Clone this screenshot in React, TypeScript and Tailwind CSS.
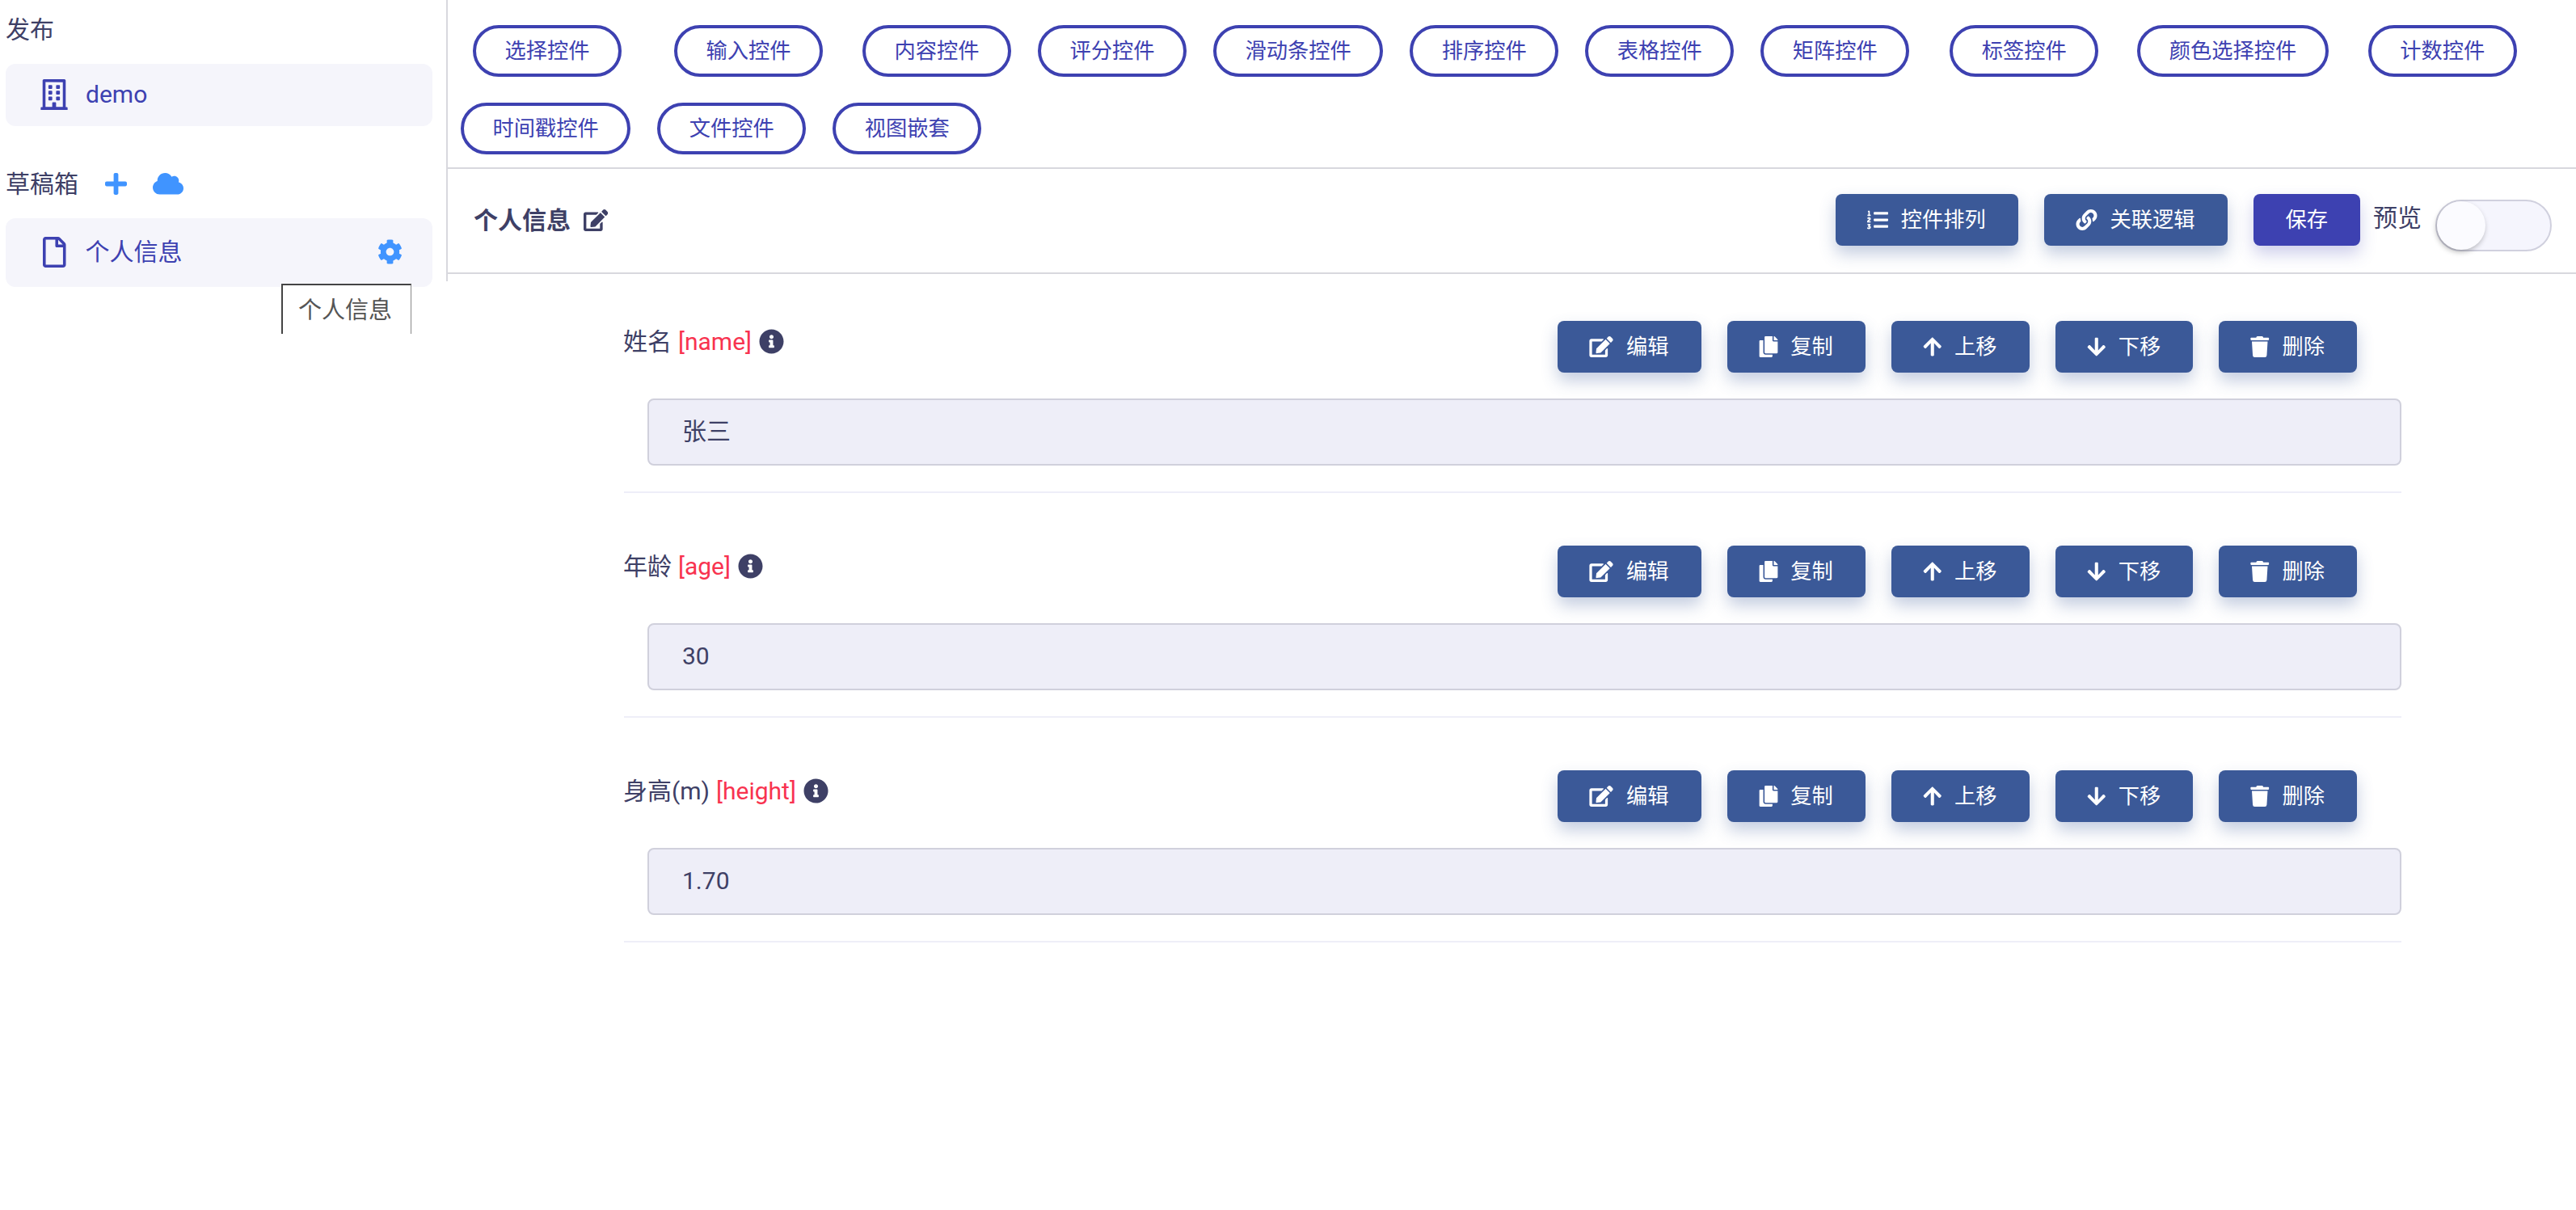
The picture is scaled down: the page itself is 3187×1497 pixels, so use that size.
import React from 'react';
import {
  FaArrowDown,
  FaArrowUp,
  FaCloud,
  FaCog,
  FaCopy,
  FaEdit,
  FaInfoCircle,
  FaLink,
  FaListOl,
  FaPlus,
  FaRegBuilding,
  FaRegFile,
  FaTrash,
} from 'react-icons/fa';

// extra left margins reproduce the uneven spacing of the control palette
const CHIPS = [
  { label: '选择控件', extra: 'ml-[15px]' },
  { label: '输入控件', extra: 'ml-[32px]' },
  { label: '内容控件', extra: 'ml-[16px]' },
  { label: '评分控件', extra: '' },
  { label: '滑动条控件', extra: '' },
  { label: '排序控件', extra: '' },
  { label: '表格控件', extra: '' },
  { label: '矩阵控件', extra: '' },
  { label: '标签控件', extra: 'ml-[17px]' },
  { label: '颜色选择控件', extra: 'ml-[15px]' },
  { label: '计数控件', extra: 'ml-[16px]' },
  { label: '时间戳控件', extra: '' },
  { label: '文件控件', extra: '' },
  { label: '视图嵌套', extra: '' },
];

const FIELDS = [
  { label: '姓名', name: '[name]', value: '张三' },
  { label: '年龄', name: '[age]', value: '30' },
  { label: '身高(m)', name: '[height]', value: '1.70' },
];

const ROW_ACTIONS = [
  { label: '编辑', icon: FaEdit, iconClass: 'w-[30px]' },
  { label: '复制', icon: FaCopy, iconClass: 'w-[24px]' },
  { label: '上移', icon: FaArrowUp, iconClass: 'w-[23.5px]' },
  { label: '下移', icon: FaArrowDown, iconClass: 'w-[23.5px]' },
  { label: '删除', icon: FaTrash, iconClass: 'w-[23.5px]' },
];

const ActionButton: React.FC<{ label: string; icon?: React.ElementType; iconClass?: string; save?: boolean }> = ({
  label,
  icon: Icon,
  iconClass,
  save,
}) => (
  <button
    className={
      save
        ? 'flex h-[64px] items-center rounded-[8px] bg-[#3d41b1] px-[40px] text-[26.25px] text-white shadow-[0_10px_20px_rgba(61,65,177,0.25)]'
        : 'flex h-[64px] items-center gap-[15.75px] rounded-[8px] bg-[#3b5998] pl-[39px] pr-[40px] text-[26.25px] text-white shadow-[0_10px_20px_rgba(59,89,152,0.3)]'
    }
  >
    {Icon && <Icon className={`h-[26px] ${iconClass}`} />}
    {label}
  </button>
);

export default function App() {
  return (
    <div className="flex min-h-screen w-full items-start bg-white font-['Roboto','Noto_Sans_CJK_SC',sans-serif] text-[30px] leading-[45px] text-[#3e4066]">
      {/* Sidebar */}
      <aside className="h-[348px] w-[554px] shrink-0 border-r-2 border-[#d8d8de] pt-[14px] pl-[7px] pr-[17px]">
        <div>发布</div>
        <div className="mt-[20px] flex h-[77px] items-center rounded-[12px] bg-[#f5f5fb] pb-[2px] pl-[43px] text-[#3d41b1]">
          <FaRegBuilding className="h-[38px] w-[34px]" />
          <span className="ml-[22px]">demo</span>
        </div>
        <div className="mt-[49px] flex items-center">
          <span>草稿箱</span>
          <FaPlus className="ml-[33px] h-[31px] w-[27px] text-[#4094ff]" />
          <FaCloud className="ml-[32px] h-[30.4px] w-[38px] text-[#4094ff]" />
        </div>
        <div className="relative mt-[20px] flex h-[85px] items-center rounded-[12px] bg-[#f5f5fb] pb-[2px] pl-[46px] text-[#3d41b1]">
          <FaRegFile className="h-[38px] w-[28.5px]" />
          <span className="ml-[24px]">个人信息</span>
          <FaCog className="ml-auto mr-[37px] h-[31px] w-[31px] text-[#4094ff]" />
          <div className="absolute left-[341px] top-[81px] z-10 h-[62px] w-[161px] border-t-2 border-l-2 border-r border-t-[#444] border-l-[#444] border-r-[#888] bg-white pl-[19px] pt-[9px] text-[29px] text-[#555]">
            个人信息
          </div>
        </div>
      </aside>

      {/* Main */}
      <main className="min-w-0 flex-1">
        <div className="flex h-[209px] flex-wrap content-start gap-x-[33px] gap-y-[32px] border-b-2 border-[#d8d8de] pl-[16px] pt-[31px]">
          {CHIPS.map((chip) => (
            <button
              key={chip.label}
              className={`flex h-[64px] items-center rounded-full border-4 border-[#3d41b1] bg-white px-[35.5px] text-[26.25px] text-[#3d41b1] ${chip.extra}`}
            >
              {chip.label}
            </button>
          ))}
        </div>

        <div className="flex h-[130px] items-center border-b-2 border-[#d8d8de] pb-[2px] pl-[32px] pr-[30px]">
          <span className="font-bold">个人信息</span>
          <FaEdit className="ml-[16px] h-[27px] w-[30.4px] text-[#3e4066]" />
          <div className="ml-auto flex items-center gap-[32px]">
            <ActionButton label="控件排列" icon={FaListOl} iconClass="w-[26px]" />
            <ActionButton label="关联逻辑" icon={FaLink} iconClass="w-[27px]" />
            <ActionButton label="保存" save />
          </div>
          <span className="ml-[16px] -mt-[6px]">预览</span>
          <div className="ml-[17px] mt-[14px] h-[64px] w-[144px] rounded-full border-2 border-[#d0d0de] bg-[#f5f5fd]">
            <div className="h-[60px] w-[60px] rounded-full bg-[#fbfbff] shadow-[-1px_3px_6px_rgba(0,0,0,0.25)]" />
          </div>
        </div>

        {/* Fields */}
        <div className="ml-[218px] flex w-[2199px] flex-col gap-[7px]">
          {FIELDS.map((field) => (
            <div key={field.name} className="border-b-2 border-[#eeeef8] pb-[32px] pt-[58px]">
              <div className="flex items-start justify-between pr-[55px]">
                <div className="-ml-[1px] mt-[3px] flex items-center">
                  <span>{field.label}</span>
                  <span className="ml-[8px] text-[#f8334f]">{field.name}</span>
                  <FaInfoCircle className="ml-[9px] h-[31px] w-[31px] text-[#3e4066]" />
                </div>
                <div className="flex gap-[32px]">
                  {ROW_ACTIONS.map((action) => (
                    <ActionButton key={action.label} label={action.label} icon={action.icon} iconClass={action.iconClass} />
                  ))}
                </div>
              </div>
              <div className="ml-[29px] mt-[32px] flex h-[83px] items-center rounded-[8px] border-2 border-[#d0d0dc] bg-[#eeeef8] pb-[2px] pl-[41px]">
                {field.value}
              </div>
            </div>
          ))}
        </div>
      </main>
    </div>
  );
}
